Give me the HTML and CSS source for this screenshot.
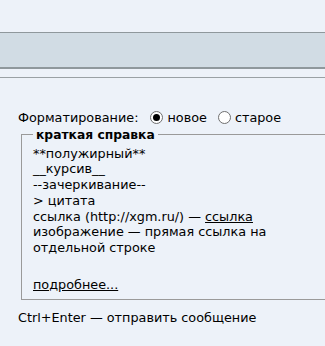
FILE: index.html
```html
<!DOCTYPE html>
<html lang="ru">
<head>
    <meta charset="UTF-8">
    <title>Ответ</title>
    <link rel="stylesheet" href="styles.css">
</head>
<body>
    <div class="toolbar"></div>
    <div class="toolbar-under"></div>

    <div class="post-form">
        <div class="format-row">
            Форматирование:
            <label class="radio"><input type="radio" name="fmt" checked> новое</label>
            <label class="radio"><input type="radio" name="fmt"> старое</label>
        </div>

        <fieldset class="help">
            <legend>краткая справка</legend>
            <div>**полужирный**</div>
            <div>__курсив__</div>
            <div>--зачеркивание--</div>
            <div>&gt; цитата</div>
            <div>ссылка (http://xgm.ru/) — <a href="#">ссылка</a></div>
            <div>изображение — прямая ссылка на<br>отдельной строке</div>
            <div class="more"><a href="#">подробнее...</a></div>
        </fieldset>

        <div class="hint">Ctrl+Enter — отправить сообщение</div>
    </div>
</body>
</html>
```

FILE: styles.css
```css
* {
    box-sizing: border-box;
}

body {
    margin: 0;
    background: #edf2f9;
    font-family: "DejaVu Sans", Verdana, sans-serif;
    font-size: 12.8px;
    line-height: 15.7px;
    color: #000;
    overflow: hidden;
}

.toolbar {
    margin-top: 32px;
    height: 37px;
    background: #d1dce4;
    border-top: 1px solid #8f989c;
    border-bottom: 2px solid #8f989c;
}

.toolbar-under {
    height: 9px;
    border-bottom: 1px solid #9aa1a5;
}

.post-form {
    padding: 32px 0 0 18px;
}

.format-row {
    display: flex;
    align-items: center;
    white-space: nowrap;
}

.radio {
    display: flex;
    align-items: center;
    margin-left: 12px;
}

.radio + .radio {
    margin-left: 11px;
}

.radio input {
    appearance: none;
    width: 13px;
    height: 13px;
    margin: 0 4px 0 0;
    border: 1px solid #6f6f6f;
    border-radius: 50%;
    background: #fff;
    position: relative;
}

.radio input:checked::after {
    content: "";
    position: absolute;
    left: 2px;
    top: 2px;
    width: 7px;
    height: 7px;
    border-radius: 50%;
    background: #000;
}

.help {
    margin: 1px -40px 0 3px;
    padding: 3px 0 7px 11px;
    border: 1px solid #9a9a9a;
    border-width: 1px 0 1px 1px;
}

.help legend {
    font-weight: bold;
    font-size: 12.3px;
    line-height: 16px;
    padding: 0 3px;
    margin-left: 0;
}

.help a {
    color: #000;
}

.more {
    margin-top: 21px;
}

.hint {
    margin-top: 10px;
}
```
